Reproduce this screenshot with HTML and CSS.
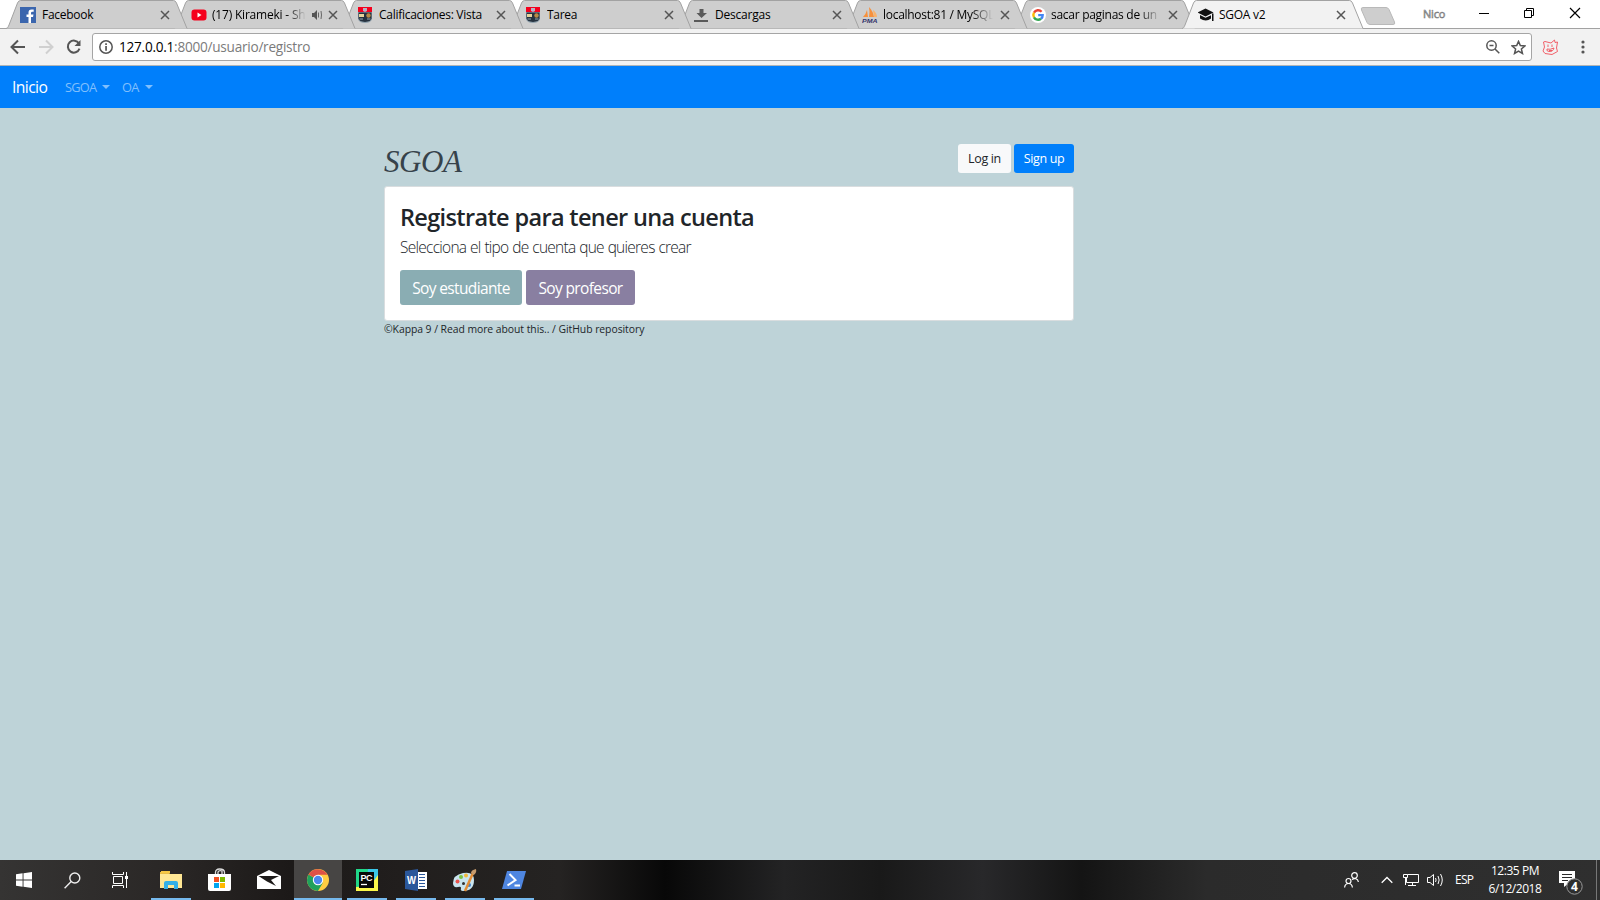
FILE: index.html
```html
<!DOCTYPE html>
<html lang="es">
<head>
<meta charset="utf-8">
<title>SGOA v2</title>
<link rel="stylesheet" href="styles.css">
</head>
<body>
<svg class="defs" width="0" height="0">
  <symbol id="tab" viewBox="0 0 182 29"><path d="M0 28.500C2 28 2 27 3 25L11.500 3Q12.500 .5 14.500 .5H167.500Q169.500 .5 170.500 3L181 28.500"/></symbol>
  <symbol id="close" viewBox="0 0 10 10"><path d="M1 1L9 9M9 1L1 9" stroke="#555" stroke-width="1.500" fill="none"/></symbol>
  <symbol id="crest" viewBox="0 0 14 16"><path d="M0 0H14V5H0Z" fill="#f5001d"/><path d="M5 1H9V4L7 5L5 4Z" fill="#b7b3c5"/><path d="M0 5H14V12Q13 16 7 16Q1 16 0 12Z" fill="#8fa0ac"/><path d="M.5 5.500H13.500V11.500Q13 14.500 7 15Q1 14.500 .5 11.500Z" fill="#26323f"/><path d="M1 7H6V10H1Z" fill="#e7d39b"/><circle cx="10.500" cy="8.500" r="2.200" fill="#b98a45"/><path d="M1.500 12H5M9 12H12.500" stroke="#91a6b2"/></symbol>
</svg>
<div class="browser">
  <header class="tabs">
    <div class="tab t1"><svg class="shape"><use href="#tab"/></svg>
      <svg class="fav" viewBox="0 0 16 16"><path d="M0 0H16V16H0Z" fill="#3b66ae"/><path d="M11 16V10H13L13.500 7.500H11V6Q11 4.800 12.300 4.800H13.700V2.500H11.500Q8.500 2.500 8.500 5.500V7.500H6.500V10H8.500V16Z" fill="#fff"/></svg>
      <span class="title">Facebook</span><svg class="x"><use href="#close"/></svg></div>
    <div class="tab t2"><svg class="shape"><use href="#tab"/></svg>
      <svg class="fav" viewBox="0 0 16 16"><rect x=".5" y="2.500" width="15" height="11" rx="3" fill="#f5001d"/><path d="M6.500 5.500V10.500L10.500 8Z" fill="#fff"/></svg>
      <span class="title fade">(17) Kirameki - Sh</span>
      <svg class="audio" viewBox="0 0 11 10"><path d="M0 3H2L5 0V10L2 7H0Z" fill="#555"/><path d="M6.500 2.500V7.500M9 1Q10 5 9 9" stroke="#666" fill="none"/></svg>
      <svg class="x"><use href="#close"/></svg></div>
    <div class="tab t3"><svg class="shape"><use href="#tab"/></svg><svg class="fav crest"><use href="#crest"/></svg><span class="title">Calificaciones: Vista</span><svg class="x"><use href="#close"/></svg></div>
    <div class="tab t4"><svg class="shape"><use href="#tab"/></svg><svg class="fav crest"><use href="#crest"/></svg><span class="title">Tarea</span><svg class="x"><use href="#close"/></svg></div>
    <div class="tab t5"><svg class="shape"><use href="#tab"/></svg>
      <svg class="fav" viewBox="0 0 16 16"><path d="M5.500 2H9.500V6H13L7.500 11L2.500 6H5.500ZM0 13H14V15H0Z" fill="#5a5a5a"/></svg>
      <span class="title">Descargas</span><svg class="x"><use href="#close"/></svg></div>
    <div class="tab t6"><svg class="shape"><use href="#tab"/></svg>
      <svg class="fav" viewBox="0 0 16 16"><path d="M1 10Q4 7 5 3L6 10ZM7 10Q8 5 7 0Q11 4 12 10Z" fill="#f7913d"/><path d="M12 10L11 3Q15 6 15 10Z" fill="#f9b36d"/><text x="0" y="15.500" class="pma" textLength="15.500" lengthAdjust="spacingAndGlyphs">PMA</text></svg>
      <span class="title fade">localhost:81 / MySQL</span><svg class="x"><use href="#close"/></svg></div>
    <div class="tab t7"><svg class="shape"><use href="#tab"/></svg>
      <svg class="fav" viewBox="0 0 16 16"><circle cx="8" cy="8" r="8" fill="#fff"/><g fill="none" stroke-width="2.400"><path d="M4 5.700A4.700 4.700 0 0 1 11.600 4.800" stroke="#ea4335"/><path d="M4 5.700A4.700 4.700 0 0 0 4 10.300" stroke="#fbbc05"/><path d="M4 10.300A4.700 4.700 0 0 0 11 11.700" stroke="#34a853"/><path d="M11 11.700Q12.800 10.300 12.700 8.100H8.200" stroke="#4285f4"/></g></svg>
      <span class="title fade">sacar paginas de un</span><svg class="x"><use href="#close"/></svg></div>
    <div class="tab t8 active"><svg class="shape"><use href="#tab"/></svg>
      <svg class="fav" viewBox="0 0 16 16"><path d="M7.500 1.500L15.500 5.500L7.500 9.500L-.5 5.500ZM2 8L7.500 10.800L13 8.300V11.500Q8 15.500 2 11.500ZM14 6.500H15.500V14H14Z" fill="#111"/></svg>
      <span class="title">SGOA v2</span><svg class="x"><use href="#close"/></svg></div>
    <svg class="newtab" viewBox="0 0 36 19"><path d="M3 .5H26Q28 .5 29 2.500L34.500 15Q35.500 17.500 33 17.500H10Q8 17.500 7 15.500L1.500 3Q.5 .5 3 .5Z" fill="#cecece" stroke="#b9b9b9"/></svg>
    <span class="user">Nico</span>
    <svg class="winctl" viewBox="0 0 100 12" fill="none" stroke="#000"><path d="M0 6.500H10M45.500 3.500H52.500V10.500H45.500ZM47.500 3.500V1.500H54.500V8.500H52.500"/><path d="M91.500 1.500L101.500 11.500M101.500 1.500L91.500 11.500" transform="translate(-.5 -.5)" stroke-width="1.200"/></svg>
  </header>
  <div class="toolbar">
    <svg class="nav" viewBox="0 0 72 16" fill="none" stroke-width="2"><path d="M15 8H2M8 1.500L1.500 8L8 14.500" stroke="#555"/><path d="M29 8H42M36 1.500L42.500 8L36 14.500" stroke="#d0d0d0"/><path d="M69 4.500A6 6 0 1 0 69.500 9.700" stroke="#555"/><path d="M70.500 1V7H64.500Z" fill="#555"/></svg>
    <div class="omnibox">
      <svg class="info" viewBox="0 0 14 14"><circle cx="7" cy="7" r="6.200" fill="none" stroke="#555" stroke-width="1.500"/><path d="M6.200 3.200H7.900V4.900H6.200ZM6.200 6H7.900V10.800H6.200Z" fill="#555"/></svg>
      <span class="url"><b>127.0.0.1</b>:8000/usuario/registro</span>
      <svg class="mag" viewBox="0 0 14 14" fill="none" stroke="#555" stroke-width="1.500"><circle cx="5.500" cy="5.500" r="4.700"/><path d="M3.500 5.500H7.500M9 9L13.300 13.300"/></svg>
      <svg class="star" viewBox="0 0 14 14"><path d="M7 1.300L8.700 5.200L12.900 5.600L9.700 8.400L10.700 12.600L7 10.400L3.300 12.600L4.300 8.400L1.100 5.600L5.300 5.200Z" fill="none" stroke="#555" stroke-width="1.400"/></svg>
    </div>
    <svg class="ext" viewBox="0 0 17 17" fill="none" stroke="#f0505a" stroke-width=".9"><path d="M1.500 3L3 2.500L9 4L12.500 1L13 3.500L15.500 3L14.500 9L15.500 12.500L10 15.500L3 14.500L1 12L2.500 8Z"/><path d="M6 5.500V8M10 5.500V8M5 10Q8 11 12 9Q11 13 7 12.500Q4 12 5 10M7 11.500H10"/></svg>
    <svg class="menu" viewBox="0 0 4 14" fill="#555"><circle cx="2" cy="2" r="1.600"/><circle cx="2" cy="7" r="1.600"/><circle cx="2" cy="12" r="1.600"/></svg>
  </div>
</div>
<nav class="navbar"><a class="brand">Inicio</a><a class="link">SGOA<i class="caret"></i></a><a class="link">OA<i class="caret"></i></a></nav>
<main class="page">
  <div class="container">
    <div class="head"><div class="logo">SGOA</div><div class="auth"><a class="btn light">Log in</a><a class="btn primary">Sign up</a></div></div>
    <section class="card">
      <h1>Registrate para tener una cuenta</h1>
      <p>Selecciona el tipo de cuenta que quieres crear</p>
      <div class="choices"><a class="big student">Soy estudiante</a><a class="big teacher">Soy profesor</a></div>
    </section>
    <footer>©Kappa 9 / Read more about this.. / GitHub repository</footer>
  </div>
</main>
<div class="taskbar">
  <div class="cell"><svg width="16" height="16" fill="#fff"><path d="M0 2.200L6.600 1.300V7.500H0ZM7.500 1.200L16 0V7.500H7.500ZM0 8.500H6.600V14.700L0 13.800ZM7.500 8.500H16V16L7.500 14.800Z"/></svg></div>
  <div class="cell"><svg width="17" height="17" fill="none" stroke="#eee" stroke-width="1.400"><circle cx="10.800" cy="6" r="5"/><path d="M7.200 9.600L.6 16.300"/></svg></div>
  <div class="cell tv"><svg width="17" height="16" fill="none" stroke="#fff"><path d="M1.500 4.500H10.500V11.500H1.500ZM.5 0V2.500H11.500V0M.5 16V13.500H11.500V16M14.500 0V16"/><path d="M13 4H16V7H13Z" fill="#fff" stroke="none"/></svg></div>
  <div class="cell run wide-l"><svg width="22" height="19"><path d="M0 1H9L10 3H22V17H0Z" fill="#e9bd46"/><path d="M0 3H22V17H0Z" fill="#ffe794"/><path d="M1 0H10V2H1Z" fill="#f7c843"/><path d="M4 18V12Q4 10 6 10H16Q18 10 18 12V18H14V14H8V18Z" fill="#34b0e6"/></svg></div>
  <div class="cell store"><svg width="24" height="24"><path d="M7.500 7V4.500Q7.500 1 11.500 1Q16.500 1 16.500 4.500V7M10 6V4Q11 2 14 3V6" fill="none" stroke="#ddd" stroke-width="1.300"/><path d="M0 6H23V21Q23 23 21 23H2Q0 23 0 21Z" fill="#fff"/><path d="M6 9H11V14H6Z" fill="#f25022"/><path d="M12 9H17V14H12Z" fill="#7fba00"/><path d="M6 15H11V20H6Z" fill="#00a4ef"/><path d="M12 15H17V20H12Z" fill="#ffb900"/></svg></div>
  <div class="cell mail"><svg width="24" height="20"><path d="M0 6L12 0L24 6V19H0Z" fill="#fff"/><path d="M1.500 6H22L14 10L19 16L10 11.500Z" fill="#1d1a19"/></svg></div>
  <div class="cell run chrome"><svg width="22" height="22" viewBox="0 0 22 22"><circle cx="11" cy="11" r="11" fill="#ffcd42"/><path d="M11 11L1.500 5.500A11 11 0 0 0 11 22L15.800 13.800Z" fill="#1fa15d"/><path d="M11 11L1.500 5.500A11 11 0 0 1 20.500 5.700H11Z" fill="#de5246"/><circle cx="11" cy="11" r="5.200" fill="#fff"/><circle cx="11" cy="11" r="4.200" fill="#4a87ee"/></svg></div>
  <div class="cell run sep"><svg width="22" height="22"><path d="M0 0H22V22H0Z" fill="#21d789"/><path d="M12 0H22V22H10Z" fill="#3bc7e8"/><path d="M22 6V22H0V18L14 17Z" fill="#fcf84a"/><path d="M3 3H18V19H3Z" fill="#080808"/><text x="4.500" y="11.500" class="pc" textLength="12">PC</text><path d="M5 15.500H11" stroke="#fff" stroke-width="1.300"/></svg></div>
  <div class="cell run sep"><svg width="22" height="22"><path d="M12 3H22V20H12Z" fill="#fff"/><path d="M14 5.500H20M14 8.500H20M14 11.500H20M14 14.500H20M14 17.500H20" stroke="#2b579a"/><path d="M0 2L13 0V22L0 20Z" fill="#2b579a"/><text x="2" y="15" class="word" textLength="9" lengthAdjust="spacingAndGlyphs">W</text></svg></div>
  <div class="cell run sep"><svg width="24" height="23"><path d="M0 14Q0 6 10 4Q21 2 21 11Q21 22 10 22Q7 22 8 19Q8 17 5 18Q0 19 0 14Z" fill="#c9e4ef"/><circle cx="4.500" cy="12.500" r="2" fill="#e8534d"/><circle cx="8" cy="8" r="2" fill="#7ac143"/><circle cx="13" cy="6.500" r="2" fill="#f0b83d"/><circle cx="10.500" cy="14.500" r="1.500" fill="#333"/><circle cx="16" cy="16" r="2" fill="#3f7fcb"/><path d="M20 4L12 22" stroke="#e28d36" stroke-width="2.500"/><path d="M18 4Q18 1 23 0Q24 4 20.500 6Z" fill="#c59a6c"/></svg></div>
  <div class="cell run sep"><svg width="24" height="20"><path d="M5 1H24L19 19H0Z" fill="#4f86e0"/><path d="M7.500 4L13.500 10L5.500 15.500M12.500 15.500H18" fill="none" stroke="#fff" stroke-width="2"/></svg></div>
  <div class="tray">
    <svg class="people" width="15" height="16" fill="none" stroke="#fff" stroke-width="1.200"><circle cx="4.500" cy="9" r="2.500"/><path d="M.6 15.500Q1 11.500 4.500 11.500Q8 11.500 8.400 15.500"/><circle cx="10.500" cy="3.500" r="2.800"/><path d="M8 7.500Q10 6 12 6.800Q14 7.500 14.400 10"/></svg>
    <svg class="up" width="12" height="8" fill="none" stroke="#fff" stroke-width="1.300"><path d="M.7 6.800L6 1.500L11.300 6.800"/></svg>
    <svg class="net" width="17" height="14" fill="none" stroke="#fff"><path d="M4.500 1.500H15.500V9.500H3.500V5M9.500 9.500V12.500M5 12.500H13M.5 1.500H4.500V4.500H.5ZM2.500 5V12"/></svg>
    <svg class="vol" width="17" height="14" fill="none" stroke="#fff"><path d="M.5 4.500H3L6.500 1.500V12.500L3 9.500H.5ZM8.500 5Q9.700 7 8.500 9M11 3Q13.300 7 11 11M13.500 1Q17 7 13.500 13"/></svg>
    <span class="lang">ESP</span>
    <div class="clock"><span>12:35 PM</span><span class="date">6/12/2018</span></div>
    <svg class="note" width="26" height="26"><path d="M0 2H16V14H10L5 18V14H0Z" fill="#fff"/><path d="M3 5.500H13M3 8.500H13M3 11.500H9" stroke="#2b2b2b"/><circle cx="15.500" cy="17.500" r="7.700" fill="#2e2e2e" stroke="#999"/><text x="15.500" y="22" class="count">4</text></svg>
  </div>
</div>
</body>
</html>
```
FILE: styles.css
```css
* { box-sizing: border-box; }
body { margin: 0; width: 1600px; height: 900px; overflow: hidden; display: flex; flex-direction: column; background: #bed3d8; font-family: "Open Sans", "Noto Sans", sans-serif; color: #212529; }
svg { flex: none; display: block; }
.defs { position: absolute; }
.tabs { height: 29px; display: flex; align-items: flex-start; padding-left: 6px; background: #fff; border-bottom: 1px solid #a2a2a2; }
.tab { position: relative; flex: none; width: 182px; height: 29px; margin-right: -14px; padding: 1px 18px 0 16px; display: flex; align-items: center; }
.t1 { z-index: 7; padding-left: 14px; } .t2 { z-index: 6; padding-left: 17px; } .t3 { z-index: 5; } .t4 { z-index: 4; } .t5 { z-index: 3; } .t6 { z-index: 2; } .t7 { z-index: 1; }
.t8 { z-index: 9; }
.shape { position: absolute; left: 0; top: 0; width: 182px; height: 29px; fill: #cecece; stroke: #a2a2a2; z-index: -1; }
.active .shape { fill: #f2f2f2; }
.fav { width: 16px; height: 16px; }
.crest { width: 14px; margin-right: 2px; }
.title { flex: 1; min-width: 0; margin: 0 7px 0 5px; font-size: 12px; letter-spacing: -.28px; line-height: 18px; white-space: nowrap; overflow: hidden; color: #000; }
.t1 .title { margin-left: 6px; }
.t2 .title { margin-right: 6px; letter-spacing: -.2px; }
.t5 .title { letter-spacing: -.2px; }
.fade { -webkit-mask-image: linear-gradient(90deg, #000 80%, transparent); mask-image: linear-gradient(90deg, #000 80%, transparent); }
.audio { width: 11px; height: 10px; margin-right: 5px; }
.x { width: 10px; height: 10px; }
.newtab { width: 36px; height: 19px; margin: 7px 0 0 10px; }
.user { margin: 5px 0 0 27px; width: 26px; font-size: 11px; line-height: 18px; color: #ddd; -webkit-text-stroke: .5px #666; letter-spacing: -.2px; }
.winctl { width: 100px; height: 12px; margin: 7px 0 0 30px; overflow: visible; }
.toolbar { height: 37px; background: #f2f2f2; border-bottom: 1px solid #b0b5b8; display: flex; align-items: center; padding-left: 10px; }
.nav { width: 72px; height: 16px; }
.omnibox { width: 1440px; height: 28px; margin-left: 10px; border: 1px solid #a5a5a5; border-radius: 3px; background: #fff; display: flex; align-items: center; padding: 0 5px 0 6px; }
.info { width: 14px; height: 14px; }
.url { flex: 1; margin-left: 6px; padding-bottom: 1px; font-size: 13.600px; line-height: 20px; color: #7b7b7b; letter-spacing: -.25px; }
.url b { font-weight: 400; color: #000; }
.mag { width: 14px; height: 14px; margin-right: 11px; }
.star { width: 15px; height: 15px; }
.ext { width: 17px; height: 17px; margin-left: 10px; }
.menu { width: 4px; height: 14px; margin-left: 22px; }
.navbar { height: 42px; background: #007ffb; display: flex; align-items: center; padding: 0 0 1px 12px; font-size: 12.800px; }
.brand { width: 53px; padding-top: 1px; font-size: 15.700px; color: #fff; letter-spacing: -.6px; }
.link { display: flex; align-items: center; width: 57px; color: #80bffd; letter-spacing: -.75px; }
.caret { margin-left: 6px; border: 4px solid transparent; border-top-color: #80bffd; border-bottom: 0; }
.page { flex: 1; }
.container { width: 690px; margin: 0 0 0 384px; padding-top: 36px; }
.head { height: 42px; display: flex; justify-content: space-between; align-items: flex-start; }
.logo { font: italic 31px/36px "Liberation Serif", serif; letter-spacing: -.4px; color: #36424a; }
.auth { display: flex; gap: 3px; }
.btn { height: 29px; line-height: 29px; font-size: 12.500px; border-radius: 3px; text-align: center; letter-spacing: -.35px; }
.light { width: 53px; background: #f8f9fa; }
.primary { width: 60px; background: #007ffb; color: #fff; }
.card { height: 135px; background: #fff; border: 1px solid #d9dddf; border-radius: 3px; padding: 15px; }
h1 { margin: 0; font-size: 23.500px; line-height: 31px; font-weight: 600; letter-spacing: -.65px; }
p { margin: 2px 0 0; font-size: 15.500px; line-height: 25px; font-weight: 300; letter-spacing: -.74px; word-spacing: .5px; }
.choices { display: flex; gap: 4px; margin-top: 10px; }
.big { height: 35px; border-radius: 3px; text-align: center; color: #fff; font-size: 15.500px; line-height: 37px; letter-spacing: -.64px; }
.student { width: 122px; background: #8aadb3; }
.teacher { width: 109px; background: #897fa1; }
footer { font-size: 10.400px; line-height: 16px; letter-spacing: -.05px; }
.taskbar { height: 40px; background: linear-gradient(90deg, #353433 0, #2a2726 170px, #1c1918 290px, #211e1d 400px, #252322 560px, #080808 665px, #232324 784px, #191919 880px, #28282a 983px, #141414 1082px, #2b2b2b 1207px, #2f2f2f 1600px); display: flex; color: #fff; }
.cell { width: 48px; display: flex; align-items: center; justify-content: center; border-bottom: 2px solid transparent; padding-top: 2px; }
.cell.run { border-color: #76b9ed; }
.wide-l { width: 40px; margin: 0 4px 0 7px; }
.tv { padding-left: 1px; }
.chrome { width: 48px; background: #474544; }
.store { padding-left: 2px; }
.mail { width: 51px; }
.cell.sep { width: 40px; margin-left: 9px; }
.chrome + .sep { margin-left: 5px; }
.pma { font: italic bold 6px "Liberation Sans", sans-serif; fill: #34346b; }
.pc, .word { font: bold 9px "Liberation Sans", sans-serif; fill: #fff; }
.word { font-size: 11px; }
.tray { margin-left: auto; width: 256px; display: flex; align-items: center; font-size: 12px; }
.up { margin-left: 22px; }
.net { margin-left: 10px; }
.vol { margin-left: 7px; }
.lang { margin: -2px 0 0 11px; width: 20px; letter-spacing: -.7px; }
.clock { margin: -1px 0 0 12px; width: 56px; display: flex; flex-direction: column; align-items: center; line-height: 18px; letter-spacing: -.45px; }
.note { margin: 3px 0 0 16px; }
.count { font: bold 12px "Open Sans", sans-serif; fill: #fff; text-anchor: middle; }
.tray::after { content: ""; width: 1px; height: 40px; margin-left: 11px; background: #777; }
```
